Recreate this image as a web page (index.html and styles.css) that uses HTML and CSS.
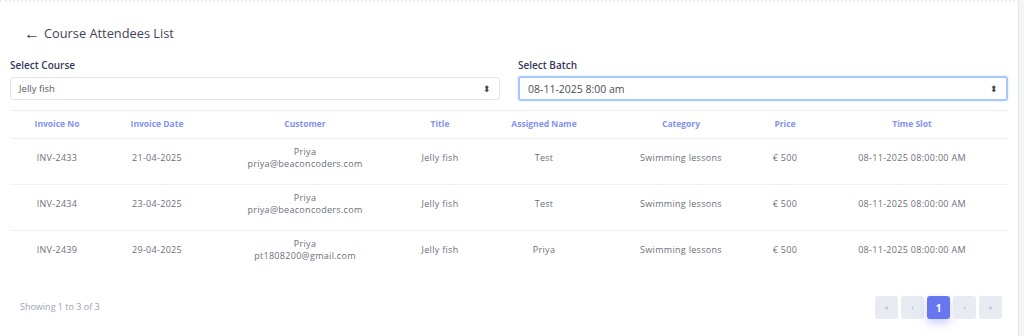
FILE: index.html
```html
<!DOCTYPE html>
<html>
<head>
<meta charset="utf-8">
<link rel="stylesheet" href="styles.css">
</head>
<body>
<div class="page">
  <div class="card">
    <h1 class="title"><span class="back">&larr;</span>Course Attendees List</h1>
    <div class="filters">
      <div class="field">
        <label class="label">Select Course</label>
        <div class="select"><span>Jelly fish</span><span class="caret">&#x2B0D;</span></div>
      </div>
      <div class="field">
        <label class="label">Select Batch</label>
        <div class="select focus"><span>08-11-2025 8:00 am</span><span class="caret">&#x2B0D;</span></div>
      </div>
    </div>
    <table class="tbl">
      <colgroup>
        <col class="c1"><col class="c2"><col class="c3"><col class="c4"><col class="c5"><col class="c6"><col class="c7"><col class="c8">
      </colgroup>
      <thead>
        <tr><th>Invoice No</th><th>Invoice Date</th><th>Customer</th><th>Title</th><th>Assigned Name</th><th>Category</th><th>Price</th><th>Time Slot</th></tr>
      </thead>
      <tbody>
        <tr><td>INV-2433</td><td>21-04-2025</td><td>Priya<br>priya@beaconcoders.com</td><td>Jelly fish</td><td>Test</td><td>Swimming lessons</td><td>€ 500</td><td>08-11-2025 08:00:00 AM</td></tr>
        <tr><td>INV-2434</td><td>23-04-2025</td><td>Priya<br>priya@beaconcoders.com</td><td>Jelly fish</td><td>Test</td><td>Swimming lessons</td><td>€ 500</td><td>08-11-2025 08:00:00 AM</td></tr>
        <tr><td>INV-2439</td><td>29-04-2025</td><td>Priya<br>pt1808200@gmail.com</td><td>Jelly fish</td><td>Priya</td><td>Swimming lessons</td><td>€ 500</td><td>08-11-2025 08:00:00 AM</td></tr>
      </tbody>
    </table>
    <div class="footer">
      <div class="info">Showing 1 to 3 of 3</div>
      <div class="pager">
        <span class="pg">&laquo;</span>
        <span class="pg">&lsaquo;</span>
        <span class="pg active">1</span>
        <span class="pg">&rsaquo;</span>
        <span class="pg">&raquo;</span>
      </div>
    </div>
  </div>
</div>
</body>
</html>
```
FILE: styles.css
```css
html, body {
  margin: 0;
  padding: 0;
  background: #f4f5f7;
}
body {
  font-family: "Open Sans", "Noto Sans", sans-serif;
  color: #6c6f78;
}
.page {
  width: 1019px;
  height: 336px;
  background: #fff;
  border-right: 1px solid #e3e5ea;
  border-top: 2px dotted #eceef1;
  box-sizing: border-box;
  overflow: hidden;
}
.card {
  padding: 0 0 0 10px;
}
.title {
  margin: 0;
  padding: 19px 0 0 14px;
  height: 24px;
  font-size: 12.8px;
  font-weight: 400;
  color: #3f4458;
  display: flex;
  align-items: center;
}
.back {
  font-size: 16px;
  line-height: 16px;
  margin-right: 4px;
  color: #3f4458;
}
.filters {
  display: grid;
  grid-template-columns: 490px 490px;
  column-gap: 18px;
  margin-top: 14px;
}
.field {
  display: flex;
  flex-direction: column;
}
.label {
  font-size: 10px;
  font-weight: 600;
  color: #34395e;
  height: 13px;
  line-height: 13px;
  margin-bottom: 5px;
}
.select {
  height: 23px;
  border: 1px solid #e4e6ec;
  border-radius: 3px;
  display: flex;
  justify-content: space-between;
  align-items: center;
  padding: 0 8px;
  font-size: 9.5px;
  color: #555a66;
  box-sizing: border-box;
}
.select.focus {
  height: 25px;
  margin-top: -1px;
  border: 2px solid #a6c8ff;
  box-shadow: 0 0 2px rgba(120, 170, 255, 0.4);
  font-size: 10.5px;
  color: #495057;
}
.caret {
  font-size: 9px;
  color: #444;
}
.tbl {
  margin-top: 9px;
  width: 998px;
  border-collapse: collapse;
  table-layout: fixed;
  border-top: 1px solid #eceef2;
}
.c1 { width: 94px; }
.c2 { width: 106px; }
.c3 { width: 190px; }
.c4 { width: 80px; }
.c5 { width: 128px; }
.c6 { width: 146px; }
.c7 { width: 62px; }
.c8 { width: 192px; }
.tbl th {
  height: 25px;
  font-size: 8.5px;
  font-weight: 700;
  color: #8493ee;
  text-align: center;
  border-bottom: 1px solid #eceef2;
  padding: 0 0 2px;
}
.tbl td {
  height: 38px;
  font-size: 9px;
  line-height: 12px;
  color: #6b6f79;
  text-align: center;
  padding: 0 0 7px;
  letter-spacing: 0.3px;
}
.tbl tbody tr + tr td {
  border-top: 1px solid #eef0f3;
}
.footer {
  display: flex;
  justify-content: space-between;
  align-items: center;
  margin-top: 20px;
  padding-left: 10px;
  padding-right: 16px;
}
.info {
  font-size: 9px;
  color: #9ca1b4;
  margin-bottom: 3px;
}
.pager {
  display: flex;
  gap: 3px;
}
.pg {
  width: 23px;
  height: 23px;
  border-radius: 3px;
  background: #e8ebf2;
  color: #9aa0b0;
  font-size: 7px;
  display: flex;
  align-items: center;
  justify-content: center;
}
.pg.active {
  background: #6777ef;
  color: #fff;
  font-size: 10px;
  font-weight: 700;
  box-shadow: 0 4px 8px rgba(103, 119, 239, 0.35);
}
```
